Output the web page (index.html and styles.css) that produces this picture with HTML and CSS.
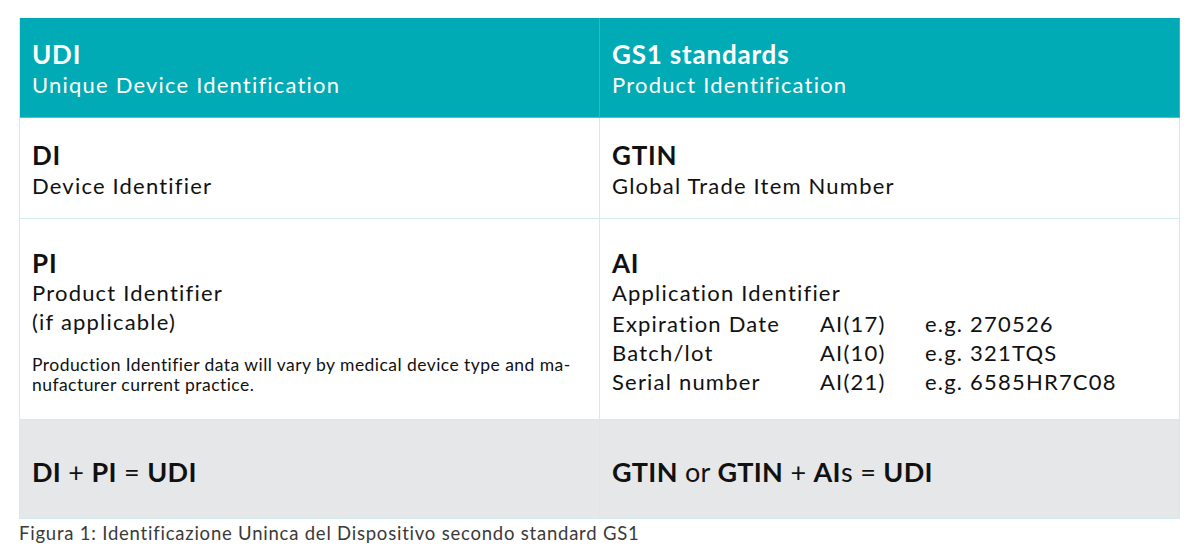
FILE: index.html
```html
<!DOCTYPE html>
<html lang="en">
<head>
<meta charset="utf-8">
<title>UDI vs GS1</title>
<link rel="stylesheet" href="styles.css">
</head>
<body>
<div class="page">
  <div class="table">
    <div class="cell head">
      <div class="title">UDI</div>
      <div class="sub">Unique Device Identification</div>
    </div>
    <div class="cell head">
      <div class="title">GS1 standards</div>
      <div class="sub">Product Identification</div>
    </div>

    <div class="cell row2">
      <div class="title">DI</div>
      <div class="sub">Device Identifier</div>
    </div>
    <div class="cell row2">
      <div class="title">GTIN</div>
      <div class="sub">Global Trade Item Number</div>
    </div>

    <div class="cell row3">
      <div class="title">PI</div>
      <div class="sub">Product Identifier</div>
      <div class="sub">(if applicable)</div>
      <p class="note">Production Identifier data will vary by medical device type and ma-<br>nufacturer current practice.</p>
    </div>
    <div class="cell row3">
      <div class="title">AI</div>
      <div class="sub">Application Identifier</div>
      <div class="ai-grid">
        <span>Expiration Date</span><span>AI(17)</span><span>e.g. 270526</span>
        <span>Batch/lot</span><span>AI(10)</span><span>e.g. 321TQS</span>
        <span>Serial number</span><span>AI(21)</span><span>e.g. 6585HR7C08</span>
      </div>
    </div>

    <div class="cell foot">
      <div class="formula"><b>DI</b> + <b>PI</b> = <b>UDI</b></div>
    </div>
    <div class="cell foot">
      <div class="formula"><b>GTIN</b> <span class="light">or</span> <b>GTIN</b> + <b>AI</b><span class="light">s</span> = <b>UDI</b></div>
    </div>
  </div>
  <p class="caption">Figura 1: Identificazione Uninca del Dispositivo secondo standard GS1</p>
</div>
</body>
</html>
```

FILE: styles.css
```css
* { box-sizing: border-box; }

html, body {
  margin: 0;
  padding: 0;
  background: #ffffff;
}

body {
  font-family: "Lato", "Liberation Sans", sans-serif;
  color: #111111;
}

.page {
  padding: 18px 20px 0 19px;
}

.table {
  display: grid;
  grid-template-columns: 580px 580px;
  grid-template-rows: 100px 101px 201px 99px;
  border-left: 1px solid #d3eaee;
  width: 1161px;
}

.cell {
  display: flex;
  flex-direction: column;
  justify-content: center;
  padding: 0 12px;
  border-right: 1px solid #d3eaee;
  border-bottom: 1px solid #d3eaee;
}

.head,
.row2 {
  padding-top: 4px;
}

.head .sub,
.row2 .sub {
  line-height: 31px;
}

.head {
  background: #00abb5;
  color: #ffffff;
  border-right-color: #2bbac3;
  border-bottom-color: #4cc3ca;
}

.title {
  font-size: 26px;
  font-weight: 700;
  line-height: 30px;
  letter-spacing: 0.8px;
}

.sub {
  font-size: 22px;
  font-weight: 400;
  line-height: 29px;
  letter-spacing: 1.2px;
}

.row3 {
  justify-content: flex-start;
  padding-top: 29px;
}

.row3 + .row3 .sub {
  line-height: 30px;
}

.note {
  margin: 19px 0 0;
  font-size: 17.5px;
  line-height: 19.5px;
  letter-spacing: 0.45px;
}

.ai-grid {
  display: grid;
  grid-template-columns: 208px 105px auto;
  margin-top: 1px;
  font-size: 22px;
  line-height: 29px;
  letter-spacing: 1.2px;
}

.foot {
  background: #e6e7e9;
  padding-top: 5px;
}

.formula {
  font-size: 27px;
  line-height: 32px;
  letter-spacing: 0.3px;
}

.formula b {
  font-weight: 700;
}

.light {
  font-weight: 400;
}

.caption {
  margin: 2px 0 0;
  font-size: 18.5px;
  font-weight: 400;
  line-height: 24px;
  letter-spacing: 0.78px;
  color: #3a3a3a;
}
```
